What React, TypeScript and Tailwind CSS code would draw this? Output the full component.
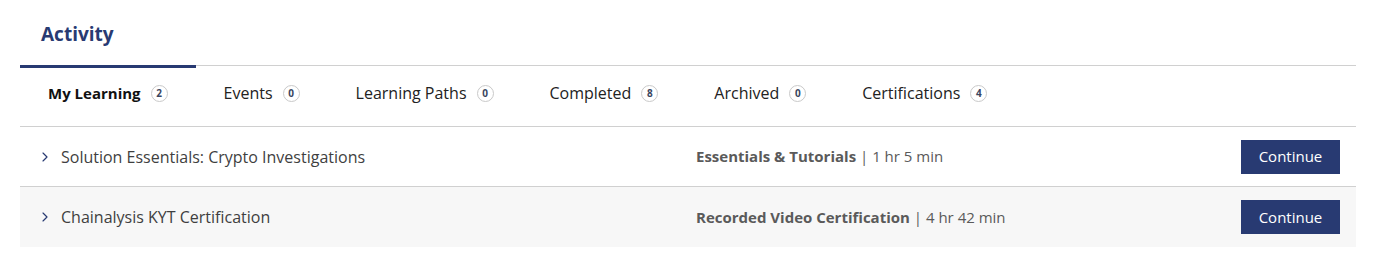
import { ChevronRight } from "lucide-react";

const tabs = [
  { label: "My Learning", count: 2, active: true },
  { label: "Events", count: 0 },
  { label: "Learning Paths", count: 0 },
  { label: "Completed", count: 8 },
  { label: "Archived", count: 0 },
  { label: "Certifications", count: 4 },
];

const rows = [
  { title: "Solution Essentials: Crypto Investigations", kind: "Essentials & Tutorials", time: "1 hr 5 min" },
  { title: "Chainalysis KYT Certification", kind: "Recorded Video Certification", time: "4 hr 42 min" },
];

function Tab({ label, count, active }: any) {
  return (
    <div className="relative flex h-full items-center px-[28px] pb-[6px]">
      {active && <div className="absolute -top-px left-0 right-0 h-[3px] bg-[#283a72]" />}
      <span className={active ? "text-[15px] font-bold text-[#111]" : "text-[16px] text-[#222]"}>{label}</span>
      <span className="ml-[10px] flex h-[17px] w-[17px] items-center justify-center rounded-full border border-[#c9c9c9] text-[10px] font-bold text-[#3a4660]">
        {count}
      </span>
    </div>
  );
}

export default function App() {
  return (
    <div className="bg-white pb-[25px] font-['Open_Sans',sans-serif]">
      <div className="ml-[20px] w-[1336px]">
        <div className="flex h-[65px] items-center pl-[21px] pt-[4px]">
          <h1 className="text-[19px] font-bold text-[#283a72]">Activity</h1>
        </div>
        <div className="flex h-[62px] border-y border-[#d0d0d0]">
          {tabs.map((t) => (
            <Tab key={t.label} {...t} />
          ))}
        </div>
        {rows.map((r, i) => (
          <div
            key={r.title}
            className={`flex h-[60px] items-center ${i === 0 ? "border-b border-[#d0d0d0]" : "bg-[#f7f7f7]"}`}
          >
            <ChevronRight className="ml-[17px] h-[16px] w-[16px] text-[#283a72]" strokeWidth={1.75} />
            <span className="ml-[8px] w-[635px] text-[16px] text-[#3f3f3f]">{r.title}</span>
            <span className="flex-1 text-[15px] text-[#5a5a5a]">
              <span className="font-bold">{r.kind}</span> | {r.time}
            </span>
            <button className="mr-[16px] h-[34px] w-[99px] bg-[#283a72] text-[15px] text-white">Continue</button>
          </div>
        ))}
      </div>
    </div>
  );
}
